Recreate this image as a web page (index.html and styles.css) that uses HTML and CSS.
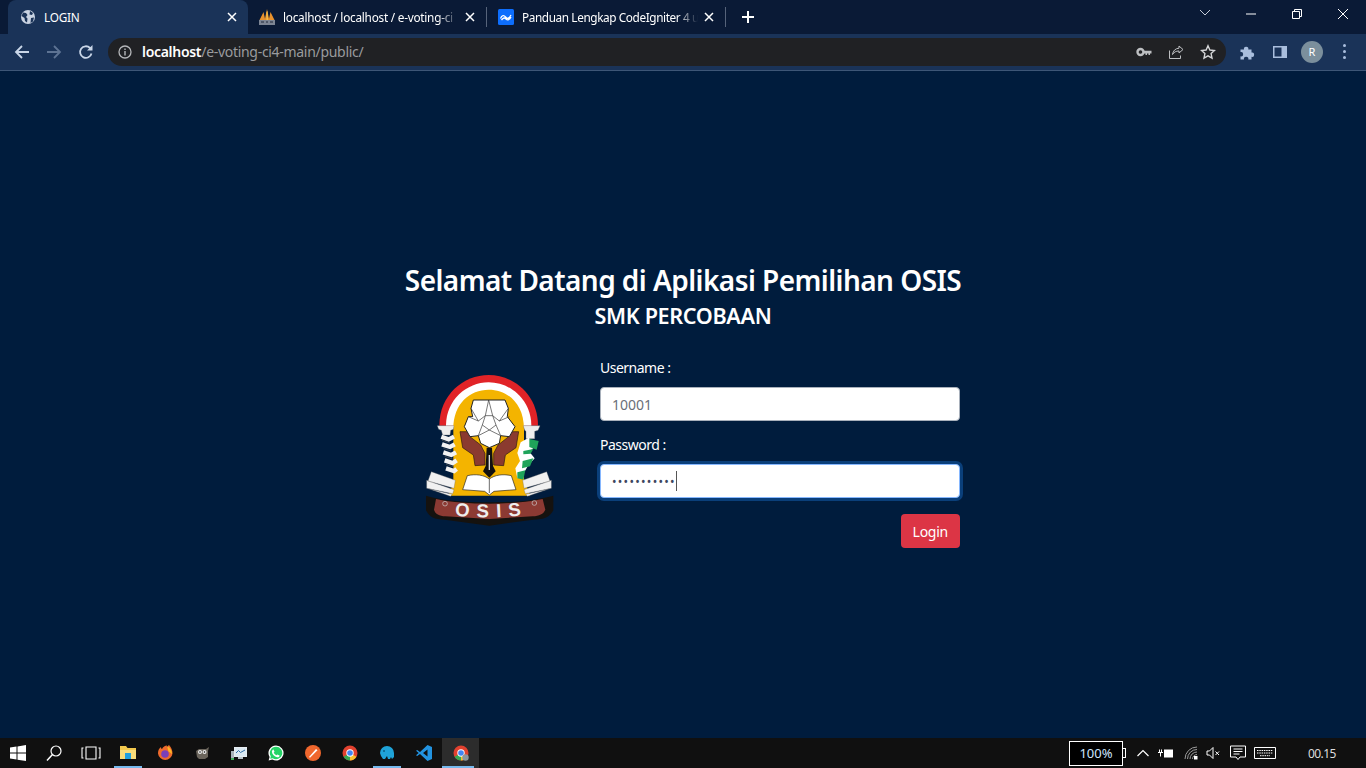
FILE: index.html
```html
<!DOCTYPE html>
<html lang="en">

<head>
    <meta charset="UTF-8">
    <meta name="viewport" content="width=device-width, initial-scale=1.0">
    <title>LOGIN</title>
    <link rel="stylesheet" href="styles.css">
</head>

<body>

    <!-- browser tabs -->
    <div class="tabstrip">
        <div class="tab tab-active">
            <svg class="favicon" viewBox="0 0 16 16">
                <circle cx="8" cy="8" r="7" fill="#c9d3e2"/>
                <path d="M3 3.500l3 .5 1.500 2-1.500 2 1.500 1.500-.5 4-2-1.500-.5-3-3-2zM10 2l3 2-1 2-2.500-.5zM11 9l3-.5-1 4-2.500 1.500z" fill="#1a3358"/>
            </svg>
            <span class="tab-title">LOGIN</span>
            <svg class="tab-close" viewBox="0 0 10 10"><path d="M1 1l8 8M9 1l-8 8"/></svg>
        </div>
        <div class="tab">
            <svg class="favicon" viewBox="0 0 16 16">
                <path d="M0 12L4.500 3l2 9zM5.500 12L8 0l2.500 12zM9.500 12l2-9L16 12z" fill="#e8912c"/>
                <path d="M7.500 3l1-1 .5 10H7.500z" fill="#f6c14b"/>
                <rect x="0" y="11" width="16" height="5" fill="#7d8594"/>
                <path d="M2 13h3M7 13h2M11 13h3" stroke="#20283a"/>
            </svg>
            <span class="tab-title tab-fade">localhost / localhost / e-voting-ci</span>
            <svg class="tab-close" viewBox="0 0 10 10"><path d="M1 1l8 8M9 1l-8 8"/></svg>
        </div>
        <div class="tab-sep"></div>
        <div class="tab">
            <svg class="favicon" viewBox="0 0 16 16">
                <rect width="16" height="16" rx="1.500" fill="#0d6efd"/>
                <path d="M2.500 9.500C4 6 6 6 7.500 8s3.500 2 5.500-2M3.500 11c2-2.500 3-2.500 4.500-1s3.500 1 5-2" stroke="#fff" stroke-width="1.300" fill="none"/>
            </svg>
            <span class="tab-title tab-fade tab-tight">Panduan Lengkap CodeIgniter 4 u</span>
            <svg class="tab-close" viewBox="0 0 10 10"><path d="M1 1l8 8M9 1l-8 8"/></svg>
        </div>
        <div class="tab-sep"></div>
        <svg class="new-tab" viewBox="0 0 12 12"><path d="M6 0v12M0 6h12"/></svg>

        <div class="window-btns">
            <svg class="win-btn" viewBox="0 0 46 20"><path d="M18 6l5 5 5-5" stroke="#c5ccd8"/></svg>
            <svg class="win-btn" viewBox="0 0 46 20"><path d="M18 10h10"/></svg>
            <svg class="win-btn" viewBox="0 0 46 20"><path d="M18.500 7.500h7v7h-7zM20.500 7.500v-2h7v7h-2"/></svg>
            <svg class="win-btn" viewBox="0 0 46 20"><path d="M18 5l10 10M28 5L18 15"/></svg>
        </div>
    </div>

    <!-- address bar -->
    <div class="toolbar">
        <svg class="nav-icon" viewBox="0 0 16 16"><path d="M15 8H2M8 2L2 8l6 6" stroke="#c9d6e8"/></svg>
        <svg class="nav-icon" viewBox="0 0 16 16"><path d="M1 8h13M8 2l6 6-6 6" stroke="#5d7393"/></svg>
        <svg class="nav-icon" viewBox="0 0 16 16"><path d="M13.500 9.500A5.800 5.800 0 1 1 12 4l1.500 1.500" stroke="#c9d6e8"/><path d="M14.500 1v5.500H9z" fill="#c9d6e8"/></svg>

        <div class="omnibox">
            <svg class="info-icon" viewBox="0 0 14 14">
                <circle cx="7" cy="7" r="6" fill="none" stroke="#b5b7ba" stroke-width="1.300"/>
                <path d="M7 6v4.500M7 3.500v1.500" stroke="#b5b7ba" stroke-width="1.400"/>
            </svg>
            <span class="url"><b>localhost</b>/e-voting-ci4-main/public/</span>
            <svg class="omni-icon" viewBox="0 0 16 16"><circle cx="4.500" cy="8" r="3" fill="none" stroke="#bdbfc2" stroke-width="2.400"/><path d="M7 6.800h8.500v2.700H14V11h-1.500V9.500H11V11H9.500V9.500H7z" fill="#bdbfc2"/></svg>
            <svg class="omni-icon" viewBox="0 0 16 16"><path d="M11 2l4 3.500-4 3.500V7C8 7 6 8 4.500 10.500 5 6.500 7.500 4.500 11 4.200zM1.500 6.500v8h11v-3" fill="none" stroke="#bdbfc2"/></svg>
            <svg class="omni-icon" viewBox="0 0 16 16"><path d="M8 1.800l1.900 4.200 4.600.5-3.400 3.100.9 4.500-4-2.300-4 2.300.9-4.500L1.500 6.500l4.600-.5z" fill="none" stroke="#d5d6d8" stroke-width="1.400"/></svg>
        </div>

        <svg class="ext-icon" viewBox="0 0 16 16"><path d="M.5 5.500H4a2.200 2.200 0 1 1 4.300 0h3.200v3a2.200 2.200 0 1 1 0 4.300v2.700H8.300a2.200 2.200 0 1 0-4.300 0H.5v-3.200a2.200 2.200 0 1 0 0-4.300z" fill="#a9bedd"/></svg>
        <svg class="ext-icon side-icon" viewBox="0 0 14 12"><path d="M0 0h14v12H0zM1.500 1.500v9h7v-9z" fill="#a9bedd" fill-rule="evenodd"/></svg>
        <div class="avatar">R</div>
        <div class="menu-dots"><i></i><i></i><i></i></div>
    </div>

    <!-- login page -->
    <div class="page">
        <div class="login">
            <h1>Selamat Datang di Aplikasi Pemilihan OSIS</h1>
            <h2>SMK PERCOBAAN</h2>
            <div class="login-row">
                <div class="logo-col">
                    <svg class="logo" viewBox="0 0 480 495">
                        <path d="M88 182C88 90 160 30 236 30s148 60 148 152H88z" fill="#e12327"/>
                        <path d="M108 182C108 105 170 52 236 52s128 53 128 130H108z" fill="#fff"/>
                        <path d="M130 192C130 115 180 74 236 74s106 41 106 118v150c6 22 14 34 18 50H116c4-16 14-28 14-50z" fill="#f4b400"/>
                        <!-- hands -->
                        <g fill="#8b3a2f" stroke="#2a1a12" stroke-width="2">
                            <path d="M150 200h28l2 15 32 25 13 25v35l-30 2-5-32-32-22z"/>
                            <path d="M326 200h-28l-2 15-32 25-13 25v35l30 2 5-32 32-22z"/>
                        </g>
                        <!-- flower -->
                        <path d="M190 105h95l10 25-3 25 23 30-17 30-26-3-4 23-30 13-26-13-7-23-25 3-17-30 12-30 13 0-5-25z" fill="#fff" stroke="#222" stroke-width="3"/>
                        <path d="M226 152l-21 16-22-38M248 152l20 16 27-38M205 168l-30-13M268 168l30-13M217 180l-12 32M258 180l14 32M205 212l33-17 34 17M226 152h22l10 28-20 15-21-15zM236 105l-10 47M236 105l12 47" fill="none" stroke="#333" stroke-width="2"/>
                        <!-- pen -->
                        <path d="M230 248h16l3 55 8 16-19 19-19-19 8-16z" fill="#111"/>
                        <path d="M236 270h4v45h-4z" fill="#ddd"/>
                        <!-- book -->
                        <path d="M172 332c26-6 50-2 66 10 16-12 40-16 66-10l14 42-66 5-14 11-14-11-66-5z" fill="#fff" stroke="#222" stroke-width="2"/>
                        <path d="M238 342v42" stroke="#222" stroke-width="2"/>
                        <!-- wheat -->
                        <path d="M82 182h50l-2 11-8 3-2 14H98l-4-14-8-3z" fill="#eee" stroke="#777"/>
                        <path d="M94 215l22 8 16-8M96 238l24 8 14-8M100 262l24 8 14-8M104 286l24 8 12-8M108 310l24 8 8-6" fill="none" stroke="#f2f2f2" stroke-width="13"/>
                        <path d="M96 226l24 8M100 250l24 8M104 274l24 8M108 298l24 8" stroke="#555" stroke-width="2"/>
                        <!-- cotton and leaves -->
                        <path d="M340 182h50l-6 14-10 3v22h-26v-22l-4-3z" fill="#eee" stroke="#777"/>
                        <path d="M332 232l24-14 20 26-18 16 16 20-20 22-14 24-18 14-6-30 14-22-8-24z" fill="#fff"/>
                        <path d="M358 222l28 6-6 26-22-8zM338 288l32-8-10 24-24 6zM322 322l24-6-6 28-18-4zM340 258l30-6-8 14-22 2z" fill="#1fa35a"/>
                        <!-- ribbon ends -->
                        <path d="M64 320l72 26-4 24-78-22zM50 346l82 28-4 12-78-16zM58 372l68 16-4 6z" fill="#f1f1f1" stroke="#666"/>
                        <path d="M410 320l-72 26 4 24 78-22zM424 346l-82 28 4 12 78-16zM416 372l-68 16 4 6z" fill="#f1f1f1" stroke="#666"/>
                        <!-- banner -->
                        <path d="M48 392c50 14 110 20 190 20s138-6 192-20v44c-10 20-28 28-60 28l-132 18-134-18c-30 0-46-8-56-28z" fill="#15120f"/>
                        <path d="M78 402c50 10 100 14 160 14s110-4 160-14l8 32c-6 14-18 18-38 20l-130 8-132-8c-18-2-30-6-34-20z" fill="#8c3a33"/>
                        <circle cx="105" cy="416" r="7" fill="none" stroke="#ccc" stroke-width="2"/>
                        <circle cx="373" cy="414" r="7" fill="none" stroke="#ccc" stroke-width="2"/>
                        <defs><path id="logoBase" d="M120 450Q250 466 370 446"/></defs>
                        <text class="logo-text"><textPath href="#logoBase" startOffset="50%">OSIS</textPath></text>
                    </svg>
                </div>
                <form class="login-form">
                    <label for="username">Username :</label>
                    <input class="field field-filled" type="text" id="username" value="10001">
                    <label for="password">Password :</label>
                    <div class="field field-focus">
                        <span class="dots">•••••••••••</span><span class="caret"></span>
                    </div>
                    <div class="form-actions">
                        <button type="button" class="btn-login">Login</button>
                    </div>
                </form>
            </div>
        </div>
    </div>

    <!-- windows taskbar -->
    <div class="taskbar">
        <div class="task-left">
            <div class="task-item">
                <svg class="task-icon" viewBox="0 0 16 16"><path d="M0 2.400l6.500-.9v6H0zM7.500 1.400L16 0v7.500H7.500zM0 8.500h6.500v6L0 13.600zM7.500 8.500H16V16l-8.500-1.300z" fill="#fff"/></svg>
            </div>
            <div class="task-item">
                <svg class="task-icon" viewBox="0 0 16 16"><circle cx="10" cy="6" r="5" fill="none" stroke="#fff" stroke-width="1.200"/><path d="M6.500 9.500L1 15.500" stroke="#fff" stroke-width="1.500"/></svg>
            </div>
            <div class="task-item">
                <svg class="task-icon task-wide" viewBox="0 0 20 16"><path d="M5 2h10v12H5zM2.500 3H1v10h1.500M17.500 3H19v10h-1.500" fill="none" stroke="#fff" stroke-width="1.100"/></svg>
            </div>
            <div class="task-item task-open">
                <svg class="task-icon" viewBox="0 0 16 16"><path d="M0 1h6l1.500 2H16v3H0z" fill="#f3c94e"/><path d="M0 5h16v9H0z" fill="#f8dc7a"/><path d="M5 8h6v6H5z" fill="#1f9fe0"/></svg>
            </div>
            <div class="task-item">
                <svg class="task-icon" viewBox="0 0 16 16"><path d="M1 8c0-3 1.500-5 3-6 0 1 .5 2 1 2 1-2 3-3.500 5-3.500-.5 1 0 1.500 1 2C10 1 12 0 12 0c2 2 3.500 5 3.500 8.500a7.300 7.300 0 0 1-14.500 0z" fill="#ef6a2c"/><path d="M10 1c3 1.500 5 4.500 5 8l-3.500-2.500z" fill="#fbb826"/><circle cx="8" cy="9" r="3.800" fill="#7b3fb8"/></svg>
            </div>
            <div class="task-item">
                <svg class="task-icon" viewBox="0 0 16 16"><path d="M2 6l3-2h7l3-2-1 4v6l-3 2H5l-2-2z" fill="#6b655c"/><circle cx="6" cy="7" r="2" fill="#eee"/><circle cx="10.500" cy="7" r="2" fill="#eee"/><circle cx="6" cy="7" r=".8" fill="#111"/><circle cx="10.500" cy="7" r=".8" fill="#111"/></svg>
            </div>
            <div class="task-item">
                <svg class="task-icon" viewBox="0 0 16 16"><path d="M3 2h13v10H3z" fill="#e6edf2"/><path d="M4 3h11v8H4z" fill="#dbe9f2"/><path d="M5 8l2.500-2.500 2 2L14 5" stroke="#2f6fa8" fill="none"/><path d="M0 6h3v9H0z" fill="#a8b3ba"/><path d="M0 13h3v2H0z" fill="#3fae5a"/><path d="M7 12h5v2H7z" fill="#b8c2c8"/></svg>
            </div>
            <div class="task-item">
                <svg class="task-icon" viewBox="0 0 16 16"><path d="M8 .5a7.500 7.500 0 0 0-6.400 11.400L.6 15.500l3.700-1A7.500 7.500 0 1 0 8 .5z" fill="#fff"/><path d="M8 1.800a6.200 6.200 0 0 0-5.200 9.500l-.6 2.500 2.500-.6A6.200 6.200 0 1 0 8 1.800z" fill="#25d366"/><path d="M5.500 4.500l1 2.300-.8 1c.6 1.200 1.500 2 2.700 2.500l1-.9 2.200 1c0 1.500-1.400 2-2.400 1.800-2.800-.5-5-2.800-5.300-5.200-.1-1.100.6-2.300 1.600-2.500z" fill="#fff"/></svg>
            </div>
            <div class="task-item">
                <svg class="task-icon" viewBox="0 0 16 16"><circle cx="8" cy="8" r="8" fill="#f0672d"/><path d="M4 12l7-8 1.500 1.200L5 12.800z" fill="#fff"/></svg>
            </div>
            <div class="task-item">
                <svg class="task-icon" viewBox="0 0 16 16"><circle cx="8" cy="8" r="7.500" fill="#e2412f"/><path d="M8 8L1.500 11.800A7.500 7.500 0 0 0 8 15.500z" fill="#34a853"/><path d="M8 8l6.500 3.800A7.500 7.500 0 0 1 8 15.500z" fill="#fbc02d"/><circle cx="8" cy="8" r="3.700" fill="#fff"/><circle cx="8" cy="8" r="2.800" fill="#4285f4"/></svg>
            </div>
            <div class="task-item task-open">
                <svg class="task-icon" viewBox="0 0 16 16"><path d="M1 8a7 7 0 0 1 14 0v4l-2 2-1-2-1 2h-2l-1-3-2 3H4l-2-3z" fill="#1fa3d8"/><circle cx="5" cy="6" r="1" fill="#0b5f86"/></svg>
            </div>
            <div class="task-item">
                <svg class="task-icon" viewBox="0 0 16 16"><path d="M11.500 0L16 2v12l-4.500 2L4 9l-2.800 2L0 10.200 2.700 8 0 5.800 1.200 5 4 7zM11.500 4.500L7 8l4.500 3.500z" fill="#2293e0" fill-rule="evenodd"/></svg>
            </div>
            <div class="task-item task-open task-current">
                <svg class="task-icon" viewBox="0 0 16 16"><circle cx="8" cy="8" r="7.500" fill="#e2412f"/><path d="M8 8L1.500 11.800A7.500 7.500 0 0 0 8 15.500z" fill="#34a853"/><path d="M8 8l6.500 3.800A7.500 7.500 0 0 1 8 15.500z" fill="#fbc02d"/><circle cx="8" cy="8" r="3.700" fill="#fff"/><circle cx="8" cy="8" r="2.800" fill="#4285f4"/><circle cx="12.500" cy="12.500" r="3.200" fill="#8b969e"/></svg>
            </div>
        </div>

        <div class="tray">
            <div class="battery-meter">100%</div>
            <div class="battery-tip"></div>
            <svg class="tray-icon tray-chevron" viewBox="0 0 14 14"><path d="M1.500 10L7 4.500l5.500 5.500" fill="none" stroke="#fff" stroke-width="1.200"/></svg>
            <svg class="tray-icon tray-power" viewBox="0 0 16 14"><path d="M6 3.500h9v8H6z" fill="#fff"/><path d="M0 6.500h5M1.500 3.500v3M3.500 3.500v3M2.500 6.500v4" stroke="#fff"/></svg>
            <svg class="tray-icon tray-gap" viewBox="0 0 14 14"><path d="M1 13A12 12 0 0 1 13 1M3.500 13A9.500 9.500 0 0 1 13 3.500M6 13A7 7 0 0 1 13 6M8.500 13A4.500 4.500 0 0 1 13 8.500" fill="none" stroke="#9a9a9a"/><path d="M10 10h3.500v3.500H10z" fill="#fff"/></svg>
            <svg class="tray-icon" viewBox="0 0 14 14"><path d="M1 5h2.500L7 1.500v11L3.500 9H1zM9.500 5.500l3.500 3.500M13 5.500L9.500 9" fill="none" stroke="#fff"/></svg>
            <svg class="tray-icon tray-gap tray-note" viewBox="0 0 16 16"><path d="M.5 1h15v11H10l-2 2.500L6 12H.5zM3.500 4h9M3.500 6.500h9M3.500 9h6" fill="none" stroke="#fff"/></svg>
            <svg class="tray-icon tray-kbd" viewBox="0 0 22 12"><path d="M.5.500h21v11H.5z" fill="none" stroke="#fff"/><path d="M3 3.500h16M3 6h16M6 8.700h10" stroke="#fff" stroke-dasharray="1.500 .8"/></svg>
            <div class="clock">00.15</div>
        </div>
    </div>

</body>

</html>
```

FILE: styles.css
```css
* {
    box-sizing: border-box;
}

html,
body {
    height: 100%;
}

body {
    margin: 0;
    height: 768px;
    overflow: hidden;
    display: flex;
    flex-direction: column;
    background-color: #001c3d;
    font-family: "Noto Sans", "Open Sans", sans-serif;
    color: #fff;
}

/* tabs */
.tabstrip {
    height: 34px;
    flex: none;
    display: flex;
    align-items: center;
    padding-left: 8px;
    background-color: #0a1a36;
}

.tab {
    width: 238px;
    height: 34px;
    flex: none;
    display: flex;
    align-items: center;
    padding: 0 11px;
}

.tab-active {
    width: 240px;
    padding-left: 12px;
    background-color: #1a3358;
    border-radius: 8px 8px 0 0;
}

.favicon {
    width: 16px;
    height: 16px;
    flex: none;
}

.tab-title {
    flex: 1;
    min-width: 0;
    margin-left: 8px;
    font-size: 11.8px;
    line-height: 16px;
    letter-spacing: -0.25px;
    white-space: nowrap;
    color: #fff;
}

.tab-fade {
    -webkit-mask-image: linear-gradient(to right, #000 88%, transparent 100%);
    mask-image: linear-gradient(to right, #000 88%, transparent 100%);
}

.tab-tight {
    letter-spacing: -0.4px;
}

.tab-close {
    width: 10px;
    height: 10px;
    flex: none;
    margin-left: 6px;
    fill: none;
    stroke: #fff;
    stroke-width: 1.5;
}

.tab-sep {
    width: 1px;
    height: 20px;
    flex: none;
    background-color: #56637a;
}

.new-tab {
    width: 12px;
    height: 12px;
    margin-left: 16px;
    fill: none;
    stroke: #fff;
    stroke-width: 2;
}

.window-btns {
    margin-left: auto;
    display: flex;
    align-self: flex-start;
    padding-top: 4px;
}

.win-btn {
    width: 46px;
    height: 20px;
    fill: none;
    stroke: #fff;
}

/* address bar */
.toolbar {
    height: 37px;
    flex: none;
    display: flex;
    align-items: center;
    padding: 0 14px 1px 14px;
    background-color: #1a3358;
    border-bottom: 1px solid #3d5677;
}

.nav-icon {
    width: 16px;
    height: 16px;
    flex: none;
    margin-right: 16px;
    fill: none;
    stroke-width: 1.8;
}

.omnibox {
    width: 1118px;
    height: 28px;
    margin-left: -2px;
    display: flex;
    align-items: center;
    padding: 0 10px;
    flex: none;
    background-color: #202124;
    border-radius: 14px;
}

.info-icon {
    width: 14px;
    height: 14px;
    flex: none;
}

.url {
    flex: 1;
    margin-left: 10px;
    font-size: 14px;
    letter-spacing: -0.3px;
    color: #9a9b9e;
}

.url b {
    font-weight: 600;
    color: #fff;
}

.omni-icon {
    width: 16px;
    height: 16px;
    flex: none;
    margin-left: 16px;
}

.ext-icon {
    width: 16px;
    height: 16px;
    flex: none;
    margin-left: 14px;
}

.side-icon {
    width: 14px;
    height: 12px;
    margin-left: 17px;
}

.avatar {
    width: 22px;
    height: 22px;
    flex: none;
    margin-left: 14px;
    border-radius: 50%;
    background-color: #7b8f9c;
    font-size: 11px;
    line-height: 22px;
    text-align: center;
}

.menu-dots {
    margin-left: 20px;
    display: flex;
    flex-direction: column;
    gap: 3px;
}

.menu-dots i {
    width: 3px;
    height: 3px;
    border-radius: 50%;
    background-color: #a9bedd;
}

/* login */
.page {
    flex: 1;
    display: flex;
    align-items: center;
    justify-content: center;
    padding-top: 2px;
}

.login {
    width: 578px;
}

h1 {
    margin: 0;
    text-align: center;
    font-size: 28px;
    font-weight: 600;
    line-height: 34px;
    letter-spacing: -0.55px;
    color: #fff;
}

h2 {
    margin: 3px 0 0;
    text-align: center;
    font-size: 21.6px;
    font-weight: 600;
    line-height: 32px;
    letter-spacing: -0.35px;
    color: #fff;
}

.login-row {
    display: flex;
    margin-top: 25px;
}

.logo-col {
    width: 194px;
    flex: none;
    display: flex;
    align-items: flex-start;
    padding-left: 16px;
    padding-top: 8px;
}

.logo {
    width: 160px;
    height: 165px;
    display: block;
}

.logo-text {
    fill: #eee;
    font-family: "Liberation Sans", sans-serif;
    font-size: 56px;
    font-weight: 700;
    letter-spacing: 22px;
    text-anchor: middle;
}

.login-form {
    flex: 1;
    padding: 0 12px;
}

label {
    display: block;
    margin-bottom: 9px;
    font-size: 14px;
    line-height: 21px;
    letter-spacing: -0.5px;
}

.field {
    display: flex;
    align-items: center;
    width: 100%;
    height: 34px;
    margin-bottom: 13px;
    padding: 0 11px;
    background-color: #fff;
    border: 1px solid #a8b0bb;
    border-radius: 4px;
    font-family: inherit;
    font-size: 14px;
    color: #6a7078;
}

.field-filled {
    outline: none;
}

.field-focus {
    border-color: #86b7fe;
    box-shadow: 0 0 0 3px #0a3f7a;
}

.dots {
    font-size: 12px;
    letter-spacing: 1.3px;
    color: #3d4660;
}

.caret {
    width: 1px;
    height: 20px;
    background-color: #555;
}

.form-actions {
    display: flex;
    justify-content: flex-end;
    margin-top: 16px;
}

.btn-login {
    height: 34px;
    padding: 0 12px;
    background-color: #dc3545;
    color: #fff;
    border: none;
    border-radius: 4px;
    font-family: inherit;
    font-size: 14px;
    letter-spacing: -0.25px;
}

/* taskbar */
.taskbar {
    height: 30px;
    flex: none;
    display: flex;
    justify-content: space-between;
    background-color: #101010;
}

.task-left {
    display: flex;
}

.task-item {
    width: 37px;
    height: 30px;
    display: flex;
    align-items: center;
    justify-content: center;
    padding-bottom: 1px;
}

.task-item:first-child {
    width: 35px;
}

.task-open {
    background-image: linear-gradient(#76b9ed, #76b9ed);
    background-size: 28px 2px;
    background-position: center bottom;
    background-repeat: no-repeat;
}

.task-current {
    background-color: #2c2c2c;
    background-size: 32px 2px;
    background-position: left bottom;
}

.task-icon {
    width: 16px;
    height: 16px;
}

.task-wide {
    width: 20px;
}

.tray {
    display: flex;
    align-items: center;
}

.battery-meter {
    width: 54px;
    height: 25px;
    background-color: #000;
    border: 1px solid #fff;
    font-size: 13px;
    line-height: 23px;
    text-align: center;
    color: #cfe6ff;
}

.battery-tip {
    width: 3px;
    height: 10px;
    border: 1px solid #fff;
    border-left: none;
}

.tray-icon {
    width: 14px;
    height: 14px;
    margin-left: 8px;
}

.tray-chevron {
    margin-left: 10px;
}

.tray-power {
    width: 16px;
}

.tray-gap {
    margin-left: 10px;
}

.tray-note {
    width: 16px;
    height: 16px;
}

.tray-kbd {
    width: 22px;
    height: 12px;
}

.clock {
    width: 90px;
    padding-left: 32px;
    font-size: 12px;
    letter-spacing: -0.6px;
    color: #ddd;
}
```
